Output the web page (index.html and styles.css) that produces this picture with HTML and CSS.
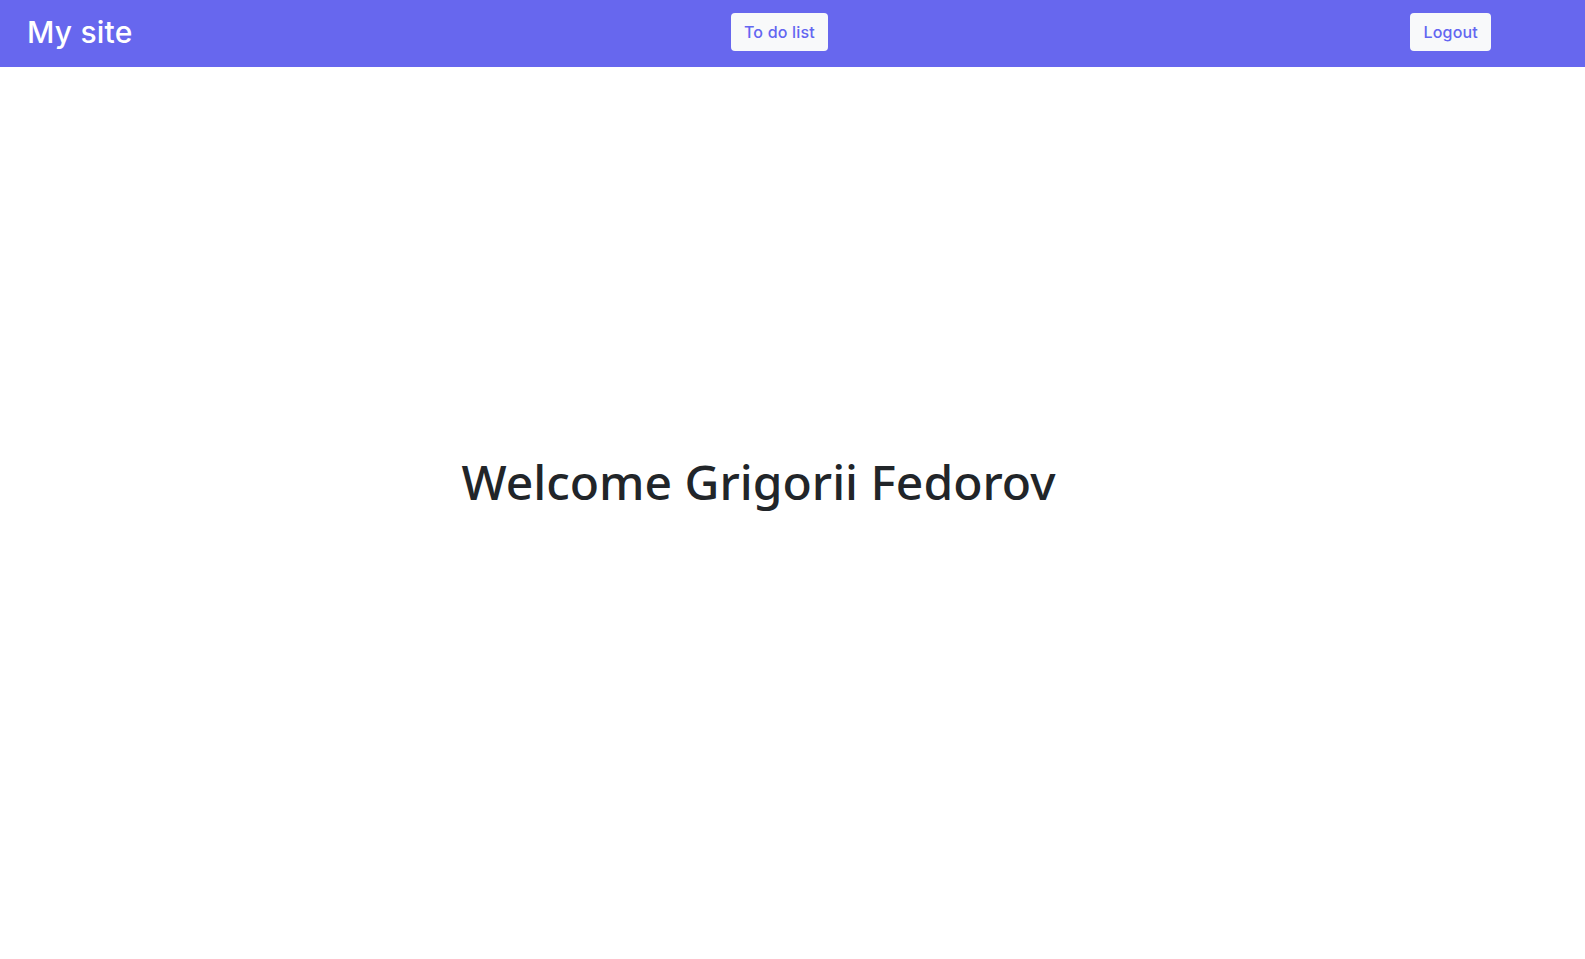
FILE: index.html
```html
<!DOCTYPE html>
<html lang="en">
<head>
<meta charset="utf-8">
<title>My site</title>
<link rel="stylesheet" href="styles.css">
</head>
<body>
<header class="navbar">
  <a class="brand" href="#">My site</a>
  <a class="btn btn-middle" href="#">To do list</a>
  <a class="btn" href="#">Logout</a>
</header>
<main class="main">
  <h1 class="welcome">Welcome Grigorii Fedorov</h1>
</main>
</body>
</html>
```
FILE: styles.css
```css
* { box-sizing: border-box; }
html, body { margin: 0; padding: 0; }
body {
  font-family: "Noto Sans", "Open Sans", sans-serif;
  color: #212529;
  background: #fff;
}
.navbar {
  height: 67px;
  background: #6767ee;
  display: flex;
  align-items: center;
  justify-content: space-between;
  padding: 0 94px 3px 27px;
}
.brand {
  font-family: Inter, "Noto Sans", sans-serif;
  font-size: 30px;
  font-weight: 500;
  color: #fff;
  text-decoration: none;
  letter-spacing: 0.2px;
  line-height: 1;
}
.btn {
  font-family: Inter, "Noto Sans", sans-serif;
  font-size: 16px;
  font-weight: 500;
  color: #6366f1;
  background: #f8f9fa;
  border-radius: 4px;
  text-decoration: none;
  height: 38px;
  display: flex;
  align-items: center;
  padding: 0 13px;
  letter-spacing: 0.2px;
}
.btn-middle { margin-left: 16px; }
.main {
  height: calc(100vh - 67px);
  display: flex;
  align-items: center;
  justify-content: center;
  padding: 0 68px 62px 0;
}
.welcome {
  margin: 0;
  font-family: "Noto Sans", sans-serif;
  font-size: 48px;
  font-weight: 500;
  line-height: 1.2;
}
```
